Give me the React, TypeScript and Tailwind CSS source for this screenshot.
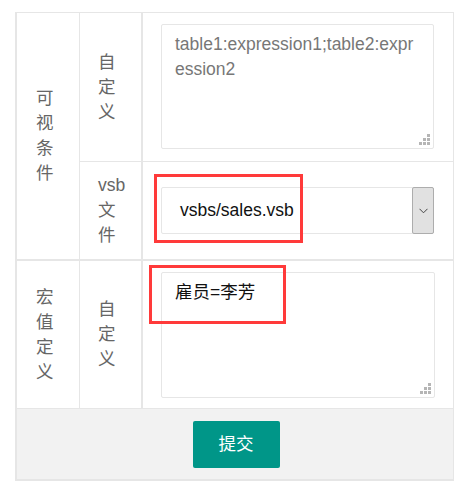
import React from "react";

const font = { fontFamily: '"Liberation Sans", "Noto Sans CJK SC", sans-serif' };

function Resizer() {
  return (
    <svg
      className="absolute right-[3px] bottom-[3px]"
      width="12"
      height="12"
      viewBox="0 0 12 12"
    >
      <rect x="8" y="0" width="3" height="3" fill="#b5b5b5" />
      <rect x="4" y="4" width="3" height="3" fill="#b5b5b5" />
      <rect x="8" y="4" width="3" height="3" fill="#b5b5b5" />
      <rect x="0" y="8" width="3" height="3" fill="#b5b5b5" />
      <rect x="4" y="8" width="3" height="3" fill="#b5b5b5" />
      <rect x="8" y="8" width="3" height="3" fill="#b5b5b5" />
    </svg>
  );
}

export default function App() {
  return (
    <div className="relative w-[467px] h-[498px] bg-white" style={font}>
      <div className="ml-[15px] pt-[12px] w-[439px]">
        <div className="bg-[#e6e6e6] pl-[2px] pr-px pt-px pb-[2px]">
          <div className="grid grid-cols-[62px_61px_311px] grid-rows-[148px_97px_148px_70px] gap-px">
            <div className="row-span-2 flex flex-col items-start justify-center bg-white pl-[19px] text-[17.5px] leading-[25px] text-[#666]">
              <span>可</span>
              <span>视</span>
              <span>条</span>
              <span>件</span>
            </div>
            <div className="flex flex-col items-start justify-center bg-white pl-[18px] text-[17.5px] leading-[25px] text-[#666]">
              <span>自</span>
              <span>定</span>
              <span>义</span>
            </div>
            <div className="bg-white border-l border-[#e6e6e6] pl-[18px] pt-[11px]">
              <div className="relative w-[273px] h-[125px]">
                <textarea
                  readOnly
                  className="block w-full h-full resize-none border border-[#e6e6e6] rounded-[2px] px-[13px] pt-[7px] text-[17.5px] leading-[25px] text-[#777] outline-none"
                  style={font}
                  value="table1:expression1;table2:expression2"
                />
                <Resizer />
              </div>
            </div>
            <div className="flex flex-col items-start justify-center bg-white pl-[18px] text-[17.5px] leading-[25px] text-[#666]">
              <span>vsb</span>
              <span>文</span>
              <span>件</span>
            </div>
            <div className="flex items-center bg-white border-l border-[#e6e6e6] pl-[18px]">
              <div className="flex w-[273px] h-[47px] border border-[#e6e6e6] rounded-[2px]">
                <div className="flex-1 flex items-center pl-[18px] text-[17.5px] text-[#111]">vsbs/sales.vsb</div>
                <div className="w-[22px] -my-px -mr-px flex items-center justify-center bg-[#e1e1e1] border border-[#adadad] rounded-[2px]">
                  <svg width="9" height="6" viewBox="0 0 9 6">
                    <path d="M0.5 0.8 L4.5 4.8 L8.5 0.8" stroke="#444" strokeWidth="1" fill="none" />
                  </svg>
                </div>
              </div>
            </div>
            <div className="flex flex-col items-start justify-center bg-white border-t border-[#e6e6e6] pl-[19px] text-[17.5px] leading-[25px] text-[#666]">
              <span>宏</span>
              <span>值</span>
              <span>定</span>
              <span>义</span>
            </div>
            <div className="flex flex-col items-start justify-center bg-white border-t border-[#e6e6e6] pl-[18px] text-[17.5px] leading-[25px] text-[#666]">
              <span>自</span>
              <span>定</span>
              <span>义</span>
            </div>
            <div className="bg-white border-t border-l border-[#e6e6e6] pl-[18px] pt-[11px]">
              <div className="relative w-[274px] h-[126px]">
                <textarea
                  readOnly
                  className="block w-full h-full resize-none border border-[#e6e6e6] rounded-[2px] px-[13px] pt-[7px] text-[17.5px] leading-[25px] text-[#111] outline-none"
                  style={font}
                  value="雇员=李芳"
                />
                <Resizer />
              </div>
            </div>
            <div className="col-span-3 flex items-center justify-center bg-[#f2f2f2] pl-[2px]">
              <button className="w-[87px] h-[47px] rounded-[2px] bg-[#009688] text-white text-[17.5px]">
                提交
              </button>
            </div>
          </div>
        </div>
      </div>
      <div className="absolute left-[154px] top-[174px] w-[149px] h-[69px] border-[3px] border-[#ff3a3a]" />
      <div className="absolute left-[149px] top-[265px] w-[137px] h-[59px] border-[3px] border-[#ff3a3a]" />
    </div>
  );
}
